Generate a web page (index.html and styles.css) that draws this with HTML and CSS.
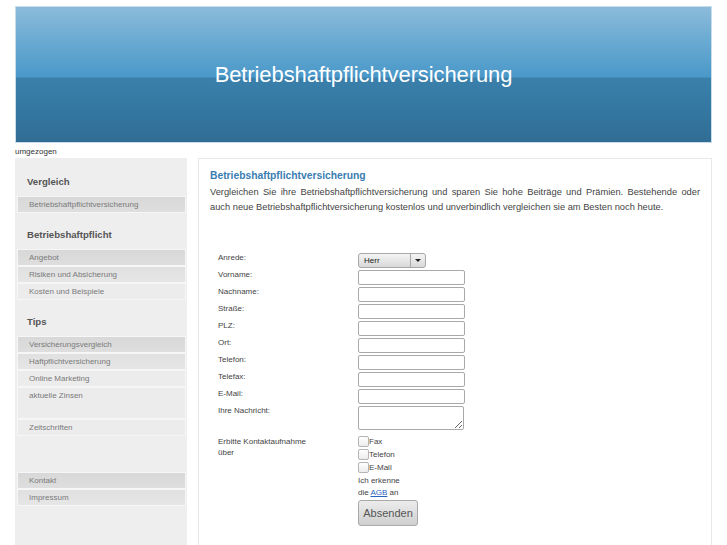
FILE: index.html
```html
<!DOCTYPE html>
<html lang="de">
<head>
<meta charset="utf-8">
<title>Betriebshaftpflichtversicherung</title>
<link rel="stylesheet" href="styles.css">
</head>
<body>
<div class="page">
  <header class="banner">
    <h1 class="banner-title">Betriebshaftpflichtversicherung</h1>
  </header>
  <div class="moved">umgezogen</div>
  <div class="layout">
    <nav class="sidebar">
      <h3 class="side-head">Vergleich</h3>
      <a class="side-item shade-dark">Betriebshaftpflichtversicherung</a>
      <h3 class="side-head">Betriebshaftpflicht</h3>
      <a class="side-item shade-dark">Angebot</a>
      <a class="side-item shade-mid">Risiken und Absicherung</a>
      <a class="side-item">Kosten und Beispiele</a>
      <h3 class="side-head">Tips</h3>
      <a class="side-item shade-dark">Versicherungsvergleich</a>
      <a class="side-item shade-mid">Haftpflichtversicherung</a>
      <a class="side-item">Online Marketing</a>
      <a class="side-item tall">aktuelle Zinsen</a>
      <a class="side-item">Zeitschriften</a>
      <div class="side-spacer"></div>
      <a class="side-item shade-dark">Kontakt</a>
      <a class="side-item shade-mid">Impressum</a>
    </nav>
    <main class="content">
      <h2 class="content-title">Betriebshaftpflichtversicherung</h2>
      <p class="intro">Vergleichen Sie ihre Betriebshaftpflichtversicherung und sparen Sie hohe Beiträge und Prämien. Bestehende oder auch neue Betriebshaftpflichtversicherung kostenlos und unverbindlich vergleichen sie am Besten noch heute.</p>
      <form class="contact">
        <table class="form-table">
          <tr>
            <td class="lbl">Anrede:</td>
            <td class="fld">
              <div class="select"><span class="select-text">Herr</span><span class="select-btn"><span class="tri"></span></span></div>
            </td>
          </tr>
          <tr><td class="lbl">Vorname:</td><td class="fld"><input class="txt" type="text"></td></tr>
          <tr><td class="lbl">Nachname:</td><td class="fld"><input class="txt" type="text"></td></tr>
          <tr><td class="lbl">Straße:</td><td class="fld"><input class="txt" type="text"></td></tr>
          <tr><td class="lbl">PLZ:</td><td class="fld"><input class="txt" type="text"></td></tr>
          <tr><td class="lbl">Ort:</td><td class="fld"><input class="txt" type="text"></td></tr>
          <tr><td class="lbl">Telefon:</td><td class="fld"><input class="txt" type="text"></td></tr>
          <tr><td class="lbl">Telefax:</td><td class="fld"><input class="txt" type="text"></td></tr>
          <tr><td class="lbl">E-Mail:</td><td class="fld"><input class="txt" type="text"></td></tr>
          <tr><td class="lbl">Ihre Nachricht:</td><td class="fld"><textarea class="area"></textarea></td></tr>
          <tr>
            <td class="lbl lbl-multi">Erbitte Kontaktaufnahme<br>über</td>
            <td class="fld">
              <label class="chk"><input type="checkbox" class="box">Fax</label>
              <label class="chk"><input type="checkbox" class="box">Telefon</label>
              <label class="chk"><input type="checkbox" class="box">E-Mail</label>
              <div class="agb">Ich erkenne<br>die <a class="agb-link">AGB</a> an</div>
              <button type="button" class="submit">Absenden</button>
            </td>
          </tr>
        </table>
      </form>
    </main>
  </div>
</div>
</body>
</html>
```

FILE: styles.css
```css
html, body {
  margin: 0;
  padding: 0;
  background: #ffffff;
}
body {
  font-family: "Liberation Sans", Arial, sans-serif;
  color: #444;
}
.page {
  padding: 6px 15px 0 15px;
}
.banner {
  height: 137px;
  box-sizing: border-box;
  border: 1px solid #c9dcea;
  background: linear-gradient(to bottom, #8cbbda 0%, #6aaad2 25%, #4a98c9 52%, #3a80ab 52.5%, #3478a2 75%, #316d94 100%);
  display: flex;
  align-items: center;
  justify-content: center;
}
.banner-title {
  margin: 0;
  font-weight: normal;
  font-size: 22px;
  color: #ffffff;
  letter-spacing: -0.1px;
}
.moved {
  font-size: 8px;
  line-height: 13px;
  padding-top: 2px;
  color: #333;
  height: 13px;
}
.layout {
  display: flex;
  gap: 11px;
  align-items: stretch;
}
.sidebar {
  width: 172px;
  box-sizing: border-box;
  background: #eeeeee;
  padding: 2px 1px 40px 2px;
  display: flex;
  flex-direction: column;
}
.side-head {
  margin: 0;
  padding: 15px 10px 7px 10px;
  font-size: 9.6px;
  line-height: 14px;
  font-weight: bold;
  color: #555;
}
.side-item {
  display: block;
  height: 15px;
  line-height: 15px;
  padding-left: 11px;
  font-size: 8px;
  color: #7a7a7a;
  background: #ececec;
  border: 1px solid #f6f6f6;
}
.side-item.shade-dark {
  background: linear-gradient(to bottom, #d8d8d8, #dedede);
}
.side-item.shade-mid {
  background: linear-gradient(to bottom, #e0e0e0, #e6e6e6);
}
.side-item.tall {
  height: 30px;
}
.side-spacer {
  height: 36px;
}
.content {
  flex: 1;
  box-sizing: border-box;
  border: 1px solid #e8e8e8;
  border-bottom: none;
  padding: 10px 11px 20px 11px;
  min-height: 388px;
}
.content-title {
  margin: 0 0 2px 0;
  font-size: 10.3px;
  line-height: 14px;
  font-weight: bold;
  color: #3a7db2;
}
.intro {
  margin: 0;
  font-size: 9.3px;
  line-height: 15px;
  text-align: justify;
  color: #444;
}
.contact {
  margin: 38px 0 0 8px;
}
.form-table {
  border-collapse: collapse;
  border-spacing: 0;
}
.form-table td {
  padding: 0 0 2px 0;
  vertical-align: top;
}
.lbl {
  width: 140px;
  font-size: 8px;
  line-height: 10px;
  color: #444;
}
.lbl-multi {
  line-height: 11px;
  padding-top: 0;
}
.txt {
  display: block;
  box-sizing: border-box;
  width: 107px;
  height: 15px;
  margin: 0;
  border: 1px solid #a9a9a9;
  border-radius: 2px;
  background: #fff;
  padding: 0 2px;
  font-size: 8px;
}
.area {
  display: block;
  box-sizing: border-box;
  width: 106px;
  height: 24px;
  margin: 0 0 4px 0;
  border: 1px solid #a9a9a9;
  border-radius: 2px;
  background: #fff;
  padding: 1px;
  resize: vertical;
}
.select {
  display: flex;
  box-sizing: border-box;
  width: 68px;
  height: 15px;
  border: 1px solid #a8a8a8;
  border-radius: 3px;
  background: linear-gradient(to bottom, #f4f4f4, #d8d8d8);
  font-size: 8px;
  color: #222;
}
.select-text {
  flex: 1;
  line-height: 13px;
  padding-left: 5px;
}
.select-btn {
  width: 14px;
  border-left: 1px solid #a8a8a8;
  display: flex;
  align-items: center;
  justify-content: center;
}
.tri {
  width: 0;
  height: 0;
  border-left: 3px solid transparent;
  border-right: 3px solid transparent;
  border-top: 3px solid #222;
}
.chk {
  display: flex;
  align-items: flex-start;
  height: 13px;
  font-size: 8px;
  line-height: 12px;
  color: #444;
}
.box {
  appearance: none;
  -webkit-appearance: none;
  margin: 0;
  width: 11px;
  height: 11px;
  box-sizing: border-box;
  border: 1px solid #b5b5b5;
  border-radius: 2px;
  background: linear-gradient(to bottom, #ffffff, #ececec);
}
.agb {
  margin-top: 0;
  font-size: 8px;
  line-height: 12px;
  color: #444;
}
.agb-link {
  color: #2a62c0;
  text-decoration: underline;
}
.submit {
  display: block;
  margin-top: 1px;
  width: 60px;
  height: 26px;
  box-sizing: border-box;
  border: 1px solid #a9a9a9;
  border-radius: 3px;
  background: linear-gradient(to bottom, #ececec, #cfcfcf);
  font-family: "Liberation Sans", Arial, sans-serif;
  font-size: 11px;
  color: #555;
  padding: 0;
}
```
